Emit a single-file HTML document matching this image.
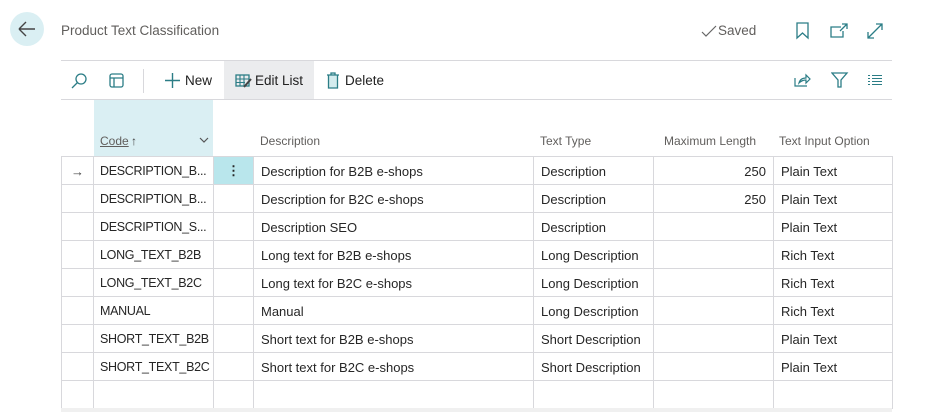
<!DOCTYPE html>
<html><head><style>
*{margin:0;padding:0;box-sizing:border-box}
body{width:928px;height:412px;background:#fff;font-family:"Liberation Sans",sans-serif;color:#212121;position:relative;overflow:hidden}
.a{position:absolute}
.t{font-size:13.5px;white-space:nowrap}
table{position:absolute;left:61px;top:156px;width:831px;table-layout:fixed;border-collapse:collapse;font-size:13px}
td{border:1px solid #d8d8dc;height:28px;padding:1px 7px 0;white-space:nowrap;overflow:hidden;color:#262626}
td.c{font-size:12.5px;letter-spacing:-0.3px;padding-left:6px;padding-right:2px}
.h{font-size:12px;color:#605e5c;top:134px}
</style></head><body>
<div class="a" style="left:10px;top:12px;width:34px;height:34px;border-radius:50%;background:#daeff3"></div>
<svg class="a" style="left:16px;top:19px" width="22" height="20"><path d="M3 10H19M3 10L10 3M3 10L10 17" stroke="#444" stroke-width="1.4" fill="none"/></svg>
<div class="a t" style="left:61px;top:23px;color:#605e5c">Product Text Classification</div>
<svg class="a" style="left:700px;top:24px" width="18" height="14"><path d="M2 8L6 12L16 2" stroke="#666" stroke-width="1.2" fill="none"/></svg>
<div class="a t" style="left:718px;top:23px;color:#605e5c">Saved</div>
<svg class="a" style="left:795px;top:22px" width="16" height="18"><path d="M2 1H13V16L7.5 11L2 16Z" stroke="#2b7d86" stroke-width="1.3" fill="none"/></svg>
<svg class="a" style="left:829px;top:22px" width="20" height="18"><path d="M12 5H2V15H14V9M13 2H18V7M18 2L11 9" stroke="#2b7d86" stroke-width="1.3" fill="none"/></svg>
<svg class="a" style="left:866px;top:22px" width="18" height="18"><path d="M2 16L16 2M10 2H16V8M2 10V16H8" stroke="#2b7d86" stroke-width="1.3" fill="none"/></svg>
<div class="a" style="left:61px;top:60px;width:831px;height:1px;background:#d8d8dc"></div>
<div class="a" style="left:61px;top:99px;width:831px;height:1px;background:#d8d8dc"></div>
<div class="a" style="left:224px;top:61px;width:90px;height:38px;background:#ebecee"></div>
<svg class="a" style="left:70px;top:72px" width="18" height="18"><circle cx="11" cy="7" r="5" stroke="#2b7d86" stroke-width="1.3" fill="none"/><path d="M7.5 10.5L2 16" stroke="#2b7d86" stroke-width="1.3"/></svg>
<svg class="a" style="left:108px;top:72px" width="18" height="18"><rect x="2" y="2" width="13" height="13" rx="2" stroke="#2b7d86" stroke-width="1.3" fill="none"/><path d="M2 6H15M6 6V15" stroke="#2b7d86" stroke-width="1.3"/></svg>
<div class="a" style="left:143px;top:69px;width:1px;height:24px;background:#d8d8dc"></div>
<svg class="a" style="left:164px;top:72px" width="18" height="18"><path d="M8.5 1V16M1 8.5H16" stroke="#2b7d86" stroke-width="1.4"/></svg>
<div class="a t" style="left:185px;top:73px">New</div>
<svg class="a" style="left:235px;top:73px" width="18" height="16"><rect x="1" y="2" width="13" height="11" stroke="#2b7d86" stroke-width="1.3" fill="none"/><path d="M1 6H14M1 9.5H10M5 2V13M9 2V13" stroke="#2b7d86" stroke-width="1.1"/><path d="M9 14L16 6" stroke="#444" stroke-width="2"/></svg>
<div class="a t" style="left:255px;top:73px">Edit List</div>
<svg class="a" style="left:326px;top:72px" width="14" height="18"><path d="M1 3H13M5 3V1H9V3M2.5 3V16H11.5V3" stroke="#2b7d86" stroke-width="1.3" fill="#d4ecee"/></svg>
<div class="a t" style="left:345px;top:73px">Delete</div>
<svg class="a" style="left:793px;top:72px" width="18" height="16"><path d="M2 6V14H14M6 11C7 7 10 6 13 6V3L17 7L13 11V8C10 8 8 9 6 11Z" stroke="#2b7d86" stroke-width="1.2" fill="none"/></svg>
<svg class="a" style="left:831px;top:72px" width="18" height="17"><path d="M1 1H16L10 8V15L7 15V8Z" stroke="#2b7d86" stroke-width="1.3" fill="none"/></svg>
<svg class="a" style="left:867px;top:74px" width="16" height="12"><path d="M1 1.5H3M5 1.5H15M1 4.5H3M5 4.5H15M1 7.5H3M5 7.5H15M1 10.5H3M5 10.5H15" stroke="#2b7d86" stroke-width="1.1"/></svg>
<div class="a" style="left:94px;top:100px;width:119px;height:56px;background:#daeff3"></div>
<div class="a h" style="left:100px;text-decoration:underline">Code</div>
<div class="a h" style="left:131px;color:#444">↑</div>
<svg class="a" style="left:199px;top:137px" width="10" height="7"><path d="M1 1L5 5L9 1" stroke="#555" stroke-width="1.2" fill="none"/></svg>
<div class="a h" style="left:260px">Description</div>
<div class="a h" style="left:540px">Text Type</div>
<div class="a h" style="left:664px">Maximum Length</div>
<div class="a h" style="left:779px">Text Input Option</div>
<table>
<colgroup><col style="width:32px"><col style="width:120px"><col style="width:40px"><col style="width:280px"><col style="width:120px"><col style="width:120px"><col style="width:119px"></colgroup>
<tr><td style="text-align:center;color:#444">→</td><td class="c">DESCRIPTION_B...</td><td style="background:#b9e6ec;text-align:center;font-weight:bold">⋮</td><td>Description for B2B e-shops</td><td>Description</td><td style="text-align:right">250</td><td>Plain Text</td></tr>
<tr><td></td><td class="c">DESCRIPTION_B...</td><td></td><td>Description for B2C e-shops</td><td>Description</td><td style="text-align:right">250</td><td>Plain Text</td></tr>
<tr><td></td><td class="c">DESCRIPTION_S...</td><td></td><td>Description SEO</td><td>Description</td><td></td><td>Plain Text</td></tr>
<tr><td></td><td class="c">LONG_TEXT_B2B</td><td></td><td>Long text for B2B e-shops</td><td>Long Description</td><td></td><td>Rich Text</td></tr>
<tr><td></td><td class="c">LONG_TEXT_B2C</td><td></td><td>Long text for B2C e-shops</td><td>Long Description</td><td></td><td>Rich Text</td></tr>
<tr><td></td><td class="c">MANUAL</td><td></td><td>Manual</td><td>Long Description</td><td></td><td>Rich Text</td></tr>
<tr><td></td><td class="c">SHORT_TEXT_B2B</td><td></td><td>Short text for B2B e-shops</td><td>Short Description</td><td></td><td>Plain Text</td></tr>
<tr><td></td><td class="c">SHORT_TEXT_B2C</td><td></td><td>Short text for B2C e-shops</td><td>Short Description</td><td></td><td>Plain Text</td></tr>
<tr><td></td><td></td><td></td><td></td><td></td><td></td><td></td></tr>
</table>
<div class="a" style="left:61px;top:408px;width:831px;height:4px;background:#f0f0f0"></div>
</body></html>
